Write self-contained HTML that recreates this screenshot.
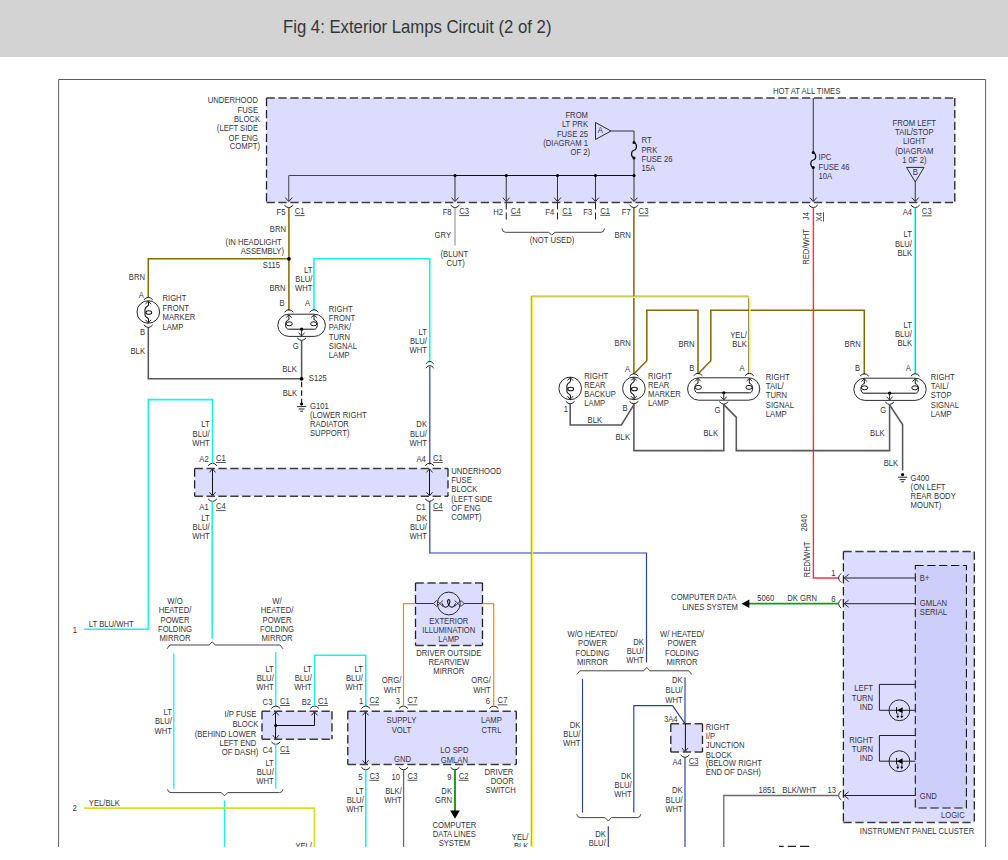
<!DOCTYPE html>
<html lang="en">
<head>
<meta charset="utf-8">
<title>Fig 4: Exterior Lamps Circuit (2 of 2)</title>
<style>
html,body{margin:0;padding:0;background:#fff;}
body{width:1008px;height:860px;position:relative;overflow:hidden;font-family:"Liberation Sans",sans-serif;}
.hdr{position:absolute;left:0;top:0;width:1008px;height:57px;background:#d3d3d3;}
.hdr h1{position:absolute;left:282.6px;top:16.5px;margin:0;font-weight:normal;font-size:17.8px;line-height:20px;color:#363636;white-space:nowrap;letter-spacing:0;transform:scaleX(0.94);transform-origin:0 0;}
svg{position:absolute;left:0;top:0;}
svg text{font-family:"Liberation Sans",sans-serif;font-size:8.3px;fill:#34343c;}
.clip{position:absolute;left:0;top:847px;width:1008px;height:13px;background:#fff;}
</style>
</head>
<body>
<div class="hdr"><h1>Fig 4: Exterior Lamps Circuit (2 of 2)</h1></div>
<svg width="1008" height="860" viewBox="0 0 1008 860">
<path d="M58.6,847 V79.5 H985.6 V847" stroke="#5c5c5c" stroke-width="1" fill="none"/>
<rect x="266.5" y="98" width="688.3" height="104.4" fill="#dcdcff" stroke="none"/>
<path d="M266.5,98 H954.8 M266.5,202.4 H954.8" stroke="#3c3c3c" stroke-width="1.5" stroke-dasharray="8.3 3.6" fill="none"/>
<path d="M266.5,98 V202.4 M954.8,98 V202.4" stroke="#222" stroke-width="1.3" stroke-dasharray="8.3 3.6" fill="none"/>
<text transform="translate(258 103.2) scale(0.924 1)" text-anchor="end">UNDERHOOD</text>
<text transform="translate(258 113) scale(0.924 1)" text-anchor="end">FUSE</text>
<text transform="translate(260 122.2) scale(0.924 1)" text-anchor="end">BLOCK</text>
<text transform="translate(258 131.2) scale(0.924 1)" text-anchor="end">(LEFT SIDE</text>
<text transform="translate(258 140.6) scale(0.924 1)" text-anchor="end">OF ENG</text>
<text transform="translate(260 149.4) scale(0.924 1)" text-anchor="end">COMPT)</text>
<path d="M288.75,201 L288.75,175.5 L455,175.5" stroke="#444" stroke-width="1.0" fill="none" stroke-linejoin="miter"/>
<path d="M455,175.5 L634,175.5" stroke="#111" stroke-width="1.1" fill="none" stroke-linejoin="miter"/>
<path d="M455,175.5 L455,201" stroke="#333" stroke-width="1.0" fill="none" stroke-linejoin="miter"/>
<circle cx="455" cy="175.5" r="1.6" fill="#000"/>
<path d="M506.25,175.5 L506.25,201" stroke="#333" stroke-width="1.0" fill="none" stroke-linejoin="miter"/>
<circle cx="506.25" cy="175.5" r="1.6" fill="#000"/>
<path d="M557.5,175.5 L557.5,201" stroke="#333" stroke-width="1.0" fill="none" stroke-linejoin="miter"/>
<circle cx="557.5" cy="175.5" r="1.6" fill="#000"/>
<path d="M595.5,175.5 L595.5,201" stroke="#333" stroke-width="1.0" fill="none" stroke-linejoin="miter"/>
<circle cx="595.5" cy="175.5" r="1.6" fill="#000"/>
<path d="M634,158 L634,201" stroke="#333" stroke-width="1.0" fill="none" stroke-linejoin="miter"/>
<circle cx="634" cy="175.5" r="1.6" fill="#000"/>
<path d="M285.35,197.6 L288.75,201.6 L292.15,197.6" stroke="#2a2a2a" stroke-width="1" fill="none"/>
<path d="M451.6,197.6 L455,201.6 L458.4,197.6" stroke="#2a2a2a" stroke-width="1" fill="none"/>
<path d="M502.85,197.6 L506.25,201.6 L509.65,197.6" stroke="#2a2a2a" stroke-width="1" fill="none"/>
<path d="M554.1,197.6 L557.5,201.6 L560.9,197.6" stroke="#2a2a2a" stroke-width="1" fill="none"/>
<path d="M592.1,197.6 L595.5,201.6 L598.9,197.6" stroke="#2a2a2a" stroke-width="1" fill="none"/>
<path d="M630.6,197.6 L634,201.6 L637.4,197.6" stroke="#2a2a2a" stroke-width="1" fill="none"/>
<path d="M284.35,205.1 Q288.75,210.1 293.15,205.1" stroke="#111" stroke-width="0.95" fill="none"/>
<path d="M450.6,205.1 Q455,210.1 459.4,205.1" stroke="#111" stroke-width="0.95" fill="none"/>
<path d="M629.6,205.1 Q634,210.1 638.4,205.1" stroke="#111" stroke-width="0.95" fill="none"/>
<path d="M506.25,202.5 V221.5" stroke="#222" stroke-width="1" stroke-dasharray="7 3" fill="none"/>
<path d="M557.5,202.5 V221.5" stroke="#222" stroke-width="1" stroke-dasharray="7 3" fill="none"/>
<path d="M595.5,202.5 V221.5" stroke="#222" stroke-width="1" stroke-dasharray="7 3" fill="none"/>
<path d="M502,228.5 Q502.5,232.3 505.5,232.3 H548.55 L551.75,235 L554.95,232.3 H601.0 Q604.0,232.3 604.5,228.5" stroke="#444" stroke-width="1" fill="none"/>
<text transform="translate(552 243.2) scale(0.924 1)" text-anchor="middle">(NOT USED)</text>
<path d="M595.5,122.5 L611,131 L595.5,139.5 Z" stroke="#2a2a2a" stroke-width="1" fill="none"/>
<text transform="translate(600.2 133.2) scale(0.924 1)" text-anchor="middle">A</text>
<path d="M611,131 L634,131 L634,142.5" stroke="#333" stroke-width="1.0" fill="none" stroke-linejoin="miter"/>
<circle cx="634" cy="142.5" r="1.5" fill="#000"/>
<circle cx="634" cy="158" r="1.5" fill="#000"/>
<path d="M634,142.5 C637.4,144.0 637.2,149.25 634,150.25 C630.8,151.25 630.6,156.5 634,158" stroke="#111" stroke-width="1.25" fill="none"/>
<text transform="translate(588 118.2) scale(0.924 1)" text-anchor="end">FROM</text>
<text transform="translate(588 127.4) scale(0.924 1)" text-anchor="end">LT PRK</text>
<text transform="translate(588 137) scale(0.924 1)" text-anchor="end">FUSE 25</text>
<text transform="translate(588 146) scale(0.924 1)" text-anchor="end">(DIAGRAM 1</text>
<text transform="translate(590 155.2) scale(0.924 1)" text-anchor="end">OF 2)</text>
<text transform="translate(641.5 143.2) scale(0.924 1)" text-anchor="start">RT</text>
<text transform="translate(641.5 152.6) scale(0.924 1)" text-anchor="start">PRK</text>
<text transform="translate(641.5 162) scale(0.924 1)" text-anchor="start">FUSE 26</text>
<text transform="translate(641.5 171.4) scale(0.924 1)" text-anchor="start">15A</text>
<path d="M813.25,98 L813.25,152.5" stroke="#333" stroke-width="1.0" fill="none" stroke-linejoin="miter"/>
<path d="M813.25,167.5 L813.25,201" stroke="#333" stroke-width="1.0" fill="none" stroke-linejoin="miter"/>
<circle cx="813.25" cy="152.5" r="1.5" fill="#000"/>
<circle cx="813.25" cy="167.5" r="1.5" fill="#000"/>
<path d="M813.25,152.5 C816.65,154.0 816.45,159.0 813.25,160.0 C810.05,161.0 809.85,166.0 813.25,167.5" stroke="#111" stroke-width="1.25" fill="none"/>
<path d="M809.85,197.6 L813.25,201.6 L816.65,197.6" stroke="#2a2a2a" stroke-width="1" fill="none"/>
<path d="M808.85,205.1 Q813.25,210.1 817.65,205.1" stroke="#111" stroke-width="0.95" fill="none"/>
<text transform="translate(773 94) scale(0.924 1)" text-anchor="start">HOT AT ALL TIMES</text>
<text transform="translate(818.5 159.8) scale(0.924 1)" text-anchor="start">IPC</text>
<text transform="translate(818.5 169.6) scale(0.924 1)" text-anchor="start">FUSE 46</text>
<text transform="translate(818.5 179) scale(0.924 1)" text-anchor="start">10A</text>
<text transform="translate(914.3 125.6) scale(0.924 1)" text-anchor="middle">FROM LEFT</text>
<text transform="translate(914.3 134.6) scale(0.924 1)" text-anchor="middle">TAIL/STOP</text>
<text transform="translate(914.3 144) scale(0.924 1)" text-anchor="middle">LIGHT</text>
<text transform="translate(914.3 153.8) scale(0.924 1)" text-anchor="middle">(DIAGRAM</text>
<text transform="translate(914.3 162.6) scale(0.924 1)" text-anchor="middle">1 0F 2)</text>
<path d="M906.5,167.4 H924 L915.25,182 Z" stroke="#2a2a2a" stroke-width="1" fill="none"/>
<text transform="translate(915.25 175.4) scale(0.924 1)" text-anchor="middle">B</text>
<path d="M915.25,182 L915.25,201" stroke="#333" stroke-width="1.0" fill="none" stroke-linejoin="miter"/>
<path d="M911.85,197.6 L915.25,201.6 L918.65,197.6" stroke="#2a2a2a" stroke-width="1" fill="none"/>
<path d="M910.85,205.1 Q915.25,210.1 919.65,205.1" stroke="#111" stroke-width="0.95" fill="none"/>
<text transform="translate(285.55 215.0) scale(0.924 1)" text-anchor="end">F5</text>
<text transform="translate(294.75 214.2) scale(0.924 1)" text-anchor="start" text-decoration="underline">C1</text>
<text transform="translate(451.6 215.0) scale(0.924 1)" text-anchor="end">F8</text>
<text transform="translate(459.2 214.2) scale(0.924 1)" text-anchor="start" text-decoration="underline">C3</text>
<text transform="translate(503.05 214.6) scale(0.924 1)" text-anchor="end">H2</text>
<text transform="translate(510.85 213.8) scale(0.924 1)" text-anchor="start" text-decoration="underline">C4</text>
<text transform="translate(554.3 214.6) scale(0.924 1)" text-anchor="end">F4</text>
<text transform="translate(562.3 213.8) scale(0.924 1)" text-anchor="start" text-decoration="underline">C1</text>
<text transform="translate(592.3 214.6) scale(0.924 1)" text-anchor="end">F3</text>
<text transform="translate(600.3 213.8) scale(0.924 1)" text-anchor="start" text-decoration="underline">C1</text>
<text transform="translate(630.8 215.2) scale(0.924 1)" text-anchor="end">F7</text>
<text transform="translate(638.6 214.4) scale(0.924 1)" text-anchor="start" text-decoration="underline">C3</text>
<text transform="translate(912.05 215.2) scale(0.924 1)" text-anchor="end">A4</text>
<text transform="translate(921.85 214.4) scale(0.924 1)" text-anchor="start" text-decoration="underline">C3</text>
<text transform="translate(809.4 220.2) rotate(-90) scale(0.924 1)" text-anchor="start">J4</text>
<text transform="translate(822.0 221.5) rotate(-90) scale(0.924 1)" text-anchor="start" text-decoration="underline">X4</text>
<text transform="translate(809.2 264.8) rotate(-90) scale(0.924 1)" text-anchor="start">RED/WHT</text>
<path d="M288.9,207.4 L288.9,310.4" stroke="#886a06" stroke-width="1.55" fill="none" stroke-linejoin="miter"/>
<path d="M288.9,258.8 L148.3,258.8 L148.3,297.2" stroke="#886a06" stroke-width="1.55" fill="none" stroke-linejoin="miter"/>
<circle cx="288.9" cy="258.8" r="1.9" fill="#000"/>
<text transform="translate(286 231.8) scale(0.924 1)" text-anchor="end">BRN</text>
<text transform="translate(281.8 245) scale(0.924 1)" text-anchor="end">(IN HEADLIGHT</text>
<text transform="translate(284 254) scale(0.924 1)" text-anchor="end">ASSEMBLY)</text>
<text transform="translate(280 268.2) scale(0.924 1)" text-anchor="end">S115</text>
<text transform="translate(145 279.6) scale(0.924 1)" text-anchor="end">BRN</text>
<circle cx="148.3" cy="312" r="11.3" fill="none" stroke="#2a2a2a" stroke-width="1"/>
<path d="M148.3,301.2 L148.60000000000002,304.2 C148.70000000000002,306.8 145.0,306.2 145.0,309.4 L145.0,314.8 C145.0,317.8 148.70000000000002,317.2 148.60000000000002,319.8 L148.3,322.8" stroke="#111" stroke-width="1.1" fill="none"/>
<ellipse cx="148.8" cy="312.5" rx="2.9" ry="1.75" fill="none" stroke="#111" stroke-width="1.05"/>
<path d="M145.5,304.2 L148.3,301 L151.10000000000002,304.2" stroke="#2a2a2a" stroke-width="1" fill="none"/>
<path d="M145.5,319.8 L148.3,323 L151.10000000000002,319.8" stroke="#2a2a2a" stroke-width="1" fill="none"/>
<path d="M143.9,299.8 Q148.3,294.8 152.70000000000002,299.8" stroke="#111" stroke-width="0.95" fill="none"/>
<path d="M143.9,324.9 Q148.3,329.9 152.70000000000002,324.9" stroke="#111" stroke-width="0.95" fill="none"/>
<text transform="translate(141.2 297.6) scale(0.924 1)" text-anchor="middle">A</text>
<text transform="translate(142.6 335.2) scale(0.924 1)" text-anchor="middle">B</text>
<text transform="translate(162.5 301.2) scale(0.924 1)" text-anchor="start">RIGHT</text>
<text transform="translate(162.5 310.8) scale(0.924 1)" text-anchor="start">FRONT</text>
<text transform="translate(162.5 320.2) scale(0.924 1)" text-anchor="start">MARKER</text>
<text transform="translate(162.5 329.6) scale(0.924 1)" text-anchor="start">LAMP</text>
<text transform="translate(145 353.8) scale(0.924 1)" text-anchor="end">BLK</text>
<path d="M148.3,327.2 L148.3,378.8 L301.6,378.8" stroke="#585858" stroke-width="1.55" fill="none" stroke-linejoin="miter"/>
<path d="M314,310.4 L314,258.8 L429.8,258.8 L429.8,361.6" stroke="#14f4ec" stroke-width="1.55" fill="none" stroke-linejoin="miter"/>
<text transform="translate(312.4 272.6) scale(0.924 1)" text-anchor="end">LT</text>
<text transform="translate(312.4 282) scale(0.924 1)" text-anchor="end">BLU/</text>
<text transform="translate(312.4 291.2) scale(0.924 1)" text-anchor="end">WHT</text>
<text transform="translate(285.6 291.2) scale(0.924 1)" text-anchor="end">BRN</text>
<text transform="translate(282 306) scale(0.924 1)" text-anchor="middle">B</text>
<text transform="translate(307.6 306) scale(0.924 1)" text-anchor="middle">A</text>
<rect x="277.8" y="314.2" width="47.599999999999966" height="22.19999999999999" rx="11.099999999999994" ry="11.099999999999994" fill="none" stroke="#2a2a2a" stroke-width="1"/>
<path d="M288.9,314.7 V319.7 C284.4,320.2 284.7,329.2 288.4,329.2 H314.5 C318.2,329.2 318.5,320.2 314,319.7 V314.7" stroke="#111" stroke-width="1" fill="none"/>
<ellipse cx="289.2" cy="323.8" rx="3.1" ry="2.0" fill="none" stroke="#111" stroke-width="1"/>
<ellipse cx="313.7" cy="323.8" rx="3.1" ry="2.0" fill="none" stroke="#111" stroke-width="1"/>
<path d="M286.09999999999997,317.7 L288.9,314.7 L291.7,317.7" stroke="#2a2a2a" stroke-width="1" fill="none"/>
<path d="M311.2,317.7 L314,314.7 L316.8,317.7" stroke="#2a2a2a" stroke-width="1" fill="none"/>
<circle cx="301.6" cy="329.2" r="1.6" fill="#000"/>
<path d="M301.6,329.2 L301.6,335.9" stroke="#2a2a2a" stroke-width="1.0" fill="none" stroke-linejoin="miter"/>
<path d="M298.6,332.7 L301.6,336.09999999999997 L304.6,332.7" stroke="#2a2a2a" stroke-width="1" fill="none"/>
<path d="M284.5,312.2 Q288.9,307.2 293.29999999999995,312.2" stroke="#111" stroke-width="0.95" fill="none"/>
<path d="M309.6,312.2 Q314,307.2 318.4,312.2" stroke="#111" stroke-width="0.95" fill="none"/>
<path d="M297.20000000000005,337.9 Q301.6,342.9 306.0,337.9" stroke="#111" stroke-width="0.95" fill="none"/>
<text transform="translate(298.8 349) scale(0.924 1)" text-anchor="end">G</text>
<text transform="translate(328.8 311.8) scale(0.924 1)" text-anchor="start">RIGHT</text>
<text transform="translate(328.8 320.8) scale(0.924 1)" text-anchor="start">FRONT</text>
<text transform="translate(328.8 330) scale(0.924 1)" text-anchor="start">PARK/</text>
<text transform="translate(328.8 339.6) scale(0.924 1)" text-anchor="start">TURN</text>
<text transform="translate(328.8 348.8) scale(0.924 1)" text-anchor="start">SIGNAL</text>
<text transform="translate(328.8 357.8) scale(0.924 1)" text-anchor="start">LAMP</text>
<path d="M301.6,340 L301.6,378.8" stroke="#585858" stroke-width="1.55" fill="none" stroke-linejoin="miter"/>
<circle cx="301.6" cy="378.8" r="1.9" fill="#000"/>
<path d="M301.6,378.8 V403" stroke="#222" stroke-width="1.2" stroke-dasharray="5.5 3" stroke-dashoffset="-3" fill="none"/>
<circle cx="301.6" cy="404" r="1.6" fill="#000"/>
<path d="M297.0,406.6 H306.20000000000005 M298.6,409 H304.6 M300.20000000000005,411.2 H303.0" stroke="#2a2a2a" stroke-width="1" fill="none"/>
<text transform="translate(296.8 372) scale(0.924 1)" text-anchor="end">BLK</text>
<text transform="translate(297.2 396) scale(0.924 1)" text-anchor="end">BLK</text>
<text transform="translate(308.8 381.4) scale(0.924 1)" text-anchor="start">S125</text>
<text transform="translate(310 408.8) scale(0.924 1)" text-anchor="start">G101</text>
<text transform="translate(310 417.8) scale(0.924 1)" text-anchor="start">(LOWER RIGHT</text>
<text transform="translate(310 427.2) scale(0.924 1)" text-anchor="start">RADIATOR</text>
<text transform="translate(310 436) scale(0.924 1)" text-anchor="start">SUPPORT)</text>
<path d="M455,207.4 L455,245.4" stroke="#a8a8a8" stroke-width="1.4" fill="none" stroke-linejoin="miter"/>
<text transform="translate(451 237.6) scale(0.924 1)" text-anchor="end">GRY</text>
<text transform="translate(454.4 257.2) scale(0.924 1)" text-anchor="middle">(BLUNT</text>
<text transform="translate(455.6 266) scale(0.924 1)" text-anchor="middle">CUT)</text>
<path d="M425.8,363.9 Q429.8,358.9 433.8,363.9" stroke="#111" stroke-width="0.95" fill="none"/>
<path d="M425.8,368.1 Q429.8,363.1 433.8,368.1" stroke="#111" stroke-width="0.95" fill="none"/>
<path d="M429.8,366.4 L429.8,464.4" stroke="#2640a0" stroke-width="1.2" fill="none" stroke-linejoin="miter"/>
<text transform="translate(427 334.6) scale(0.924 1)" text-anchor="end">LT</text>
<text transform="translate(427 343.8) scale(0.924 1)" text-anchor="end">BLU/</text>
<text transform="translate(427 353.2) scale(0.924 1)" text-anchor="end">WHT</text>
<text transform="translate(427 427.2) scale(0.924 1)" text-anchor="end">DK</text>
<text transform="translate(427 436.8) scale(0.924 1)" text-anchor="end">BLU/</text>
<text transform="translate(427 445.8) scale(0.924 1)" text-anchor="end">WHT</text>
<rect x="194.6" y="468.4" width="253.4" height="27.80000000000001" fill="#dcdcff" stroke="none"/>
<path d="M194.6,468.4 H448 M194.6,496.2 H448" stroke="#3c3c3c" stroke-width="1.5" stroke-dasharray="8.3 3.6" fill="none"/>
<path d="M194.6,468.4 V496.2 M448,468.4 V496.2" stroke="#222" stroke-width="1.3" stroke-dasharray="8.3 3.6" fill="none"/>
<path d="M212.5,469 L212.5,495.6" stroke="#111" stroke-width="1.0" fill="none" stroke-linejoin="miter"/>
<path d="M209.5,472.40000000000003 L212.5,468.8 L215.5,472.40000000000003" stroke="#2a2a2a" stroke-width="1" fill="none"/>
<path d="M209.5,492.2 L212.5,495.8 L215.5,492.2" stroke="#2a2a2a" stroke-width="1" fill="none"/>
<path d="M208.1,465.7 Q212.5,460.7 216.9,465.7" stroke="#111" stroke-width="0.95" fill="none"/>
<path d="M208.1,498.9 Q212.5,503.9 216.9,498.9" stroke="#111" stroke-width="0.95" fill="none"/>
<path d="M429.5,469 L429.5,495.6" stroke="#111" stroke-width="1.0" fill="none" stroke-linejoin="miter"/>
<path d="M426.5,472.40000000000003 L429.5,468.8 L432.5,472.40000000000003" stroke="#2a2a2a" stroke-width="1" fill="none"/>
<path d="M426.5,492.2 L429.5,495.8 L432.5,492.2" stroke="#2a2a2a" stroke-width="1" fill="none"/>
<path d="M425.1,465.7 Q429.5,460.7 433.9,465.7" stroke="#111" stroke-width="0.95" fill="none"/>
<path d="M425.1,498.9 Q429.5,503.9 433.9,498.9" stroke="#111" stroke-width="0.95" fill="none"/>
<path d="M212.5,463.6 L212.5,399.6 L148.3,399.6 L148.3,629.3 L84.2,629.3" stroke="#14f4ec" stroke-width="1.55" fill="none" stroke-linejoin="miter"/>
<path d="M212.2,501 L212.2,638.8" stroke="#14f4ec" stroke-width="1.55" fill="none" stroke-linejoin="miter"/>
<text transform="translate(209.6 427.2) scale(0.924 1)" text-anchor="end">LT</text>
<text transform="translate(209.6 436.8) scale(0.924 1)" text-anchor="end">BLU/</text>
<text transform="translate(209.6 445.8) scale(0.924 1)" text-anchor="end">WHT</text>
<text transform="translate(208.7 461.8) scale(0.924 1)" text-anchor="end">A2</text>
<text transform="translate(215.9 461.0) scale(0.924 1)" text-anchor="start" text-decoration="underline">C1</text>
<text transform="translate(208.7 510.0) scale(0.924 1)" text-anchor="end">A1</text>
<text transform="translate(215.9 509.2) scale(0.924 1)" text-anchor="start" text-decoration="underline">C4</text>
<text transform="translate(209.6 520.6) scale(0.924 1)" text-anchor="end">LT</text>
<text transform="translate(209.6 529.6) scale(0.924 1)" text-anchor="end">BLU/</text>
<text transform="translate(209.6 539.4) scale(0.924 1)" text-anchor="end">WHT</text>
<text transform="translate(425.8 461.8) scale(0.924 1)" text-anchor="end">A4</text>
<text transform="translate(433.0 461.0) scale(0.924 1)" text-anchor="start" text-decoration="underline">C1</text>
<text transform="translate(425.8 510.0) scale(0.924 1)" text-anchor="end">C1</text>
<text transform="translate(433.0 509.2) scale(0.924 1)" text-anchor="start" text-decoration="underline">C4</text>
<text transform="translate(427 520.6) scale(0.924 1)" text-anchor="end">DK</text>
<text transform="translate(427 529.6) scale(0.924 1)" text-anchor="end">BLU/</text>
<text transform="translate(427 539.4) scale(0.924 1)" text-anchor="end">WHT</text>
<text transform="translate(451.3 473.8) scale(0.924 1)" text-anchor="start">UNDERHOOD</text>
<text transform="translate(451.3 482.6) scale(0.924 1)" text-anchor="start">FUSE</text>
<text transform="translate(451.3 492) scale(0.924 1)" text-anchor="start">BLOCK</text>
<text transform="translate(451.3 501.8) scale(0.924 1)" text-anchor="start">(LEFT SIDE</text>
<text transform="translate(451.3 510.6) scale(0.924 1)" text-anchor="start">OF ENG</text>
<text transform="translate(451.3 520) scale(0.924 1)" text-anchor="start">COMPT)</text>
<path d="M429.8,501 L429.8,553 L646.5,553 L646.5,662.6" stroke="#2640a0" stroke-width="1.2" fill="none" stroke-linejoin="miter"/>
<text transform="translate(75 632.6) scale(0.924 1)" text-anchor="middle">1</text>
<text transform="translate(88.8 627) scale(0.924 1)" text-anchor="start">LT BLU/WHT</text>
<path d="M633.9,207.4 L633.9,374" stroke="#886a06" stroke-width="1.55" fill="none" stroke-linejoin="miter"/>
<text transform="translate(630.8 238) scale(0.924 1)" text-anchor="end">BRN</text>
<path d="M633.9,374 L646.8,360.8 L646.8,310.2 L698,310.2 L698,374" stroke="#886a06" stroke-width="1.55" fill="none" stroke-linejoin="miter"/>
<path d="M698,374 L710.8,360.8 L710.8,310.2 L864.3,310.2 L864.3,374.4" stroke="#886a06" stroke-width="1.55" fill="none" stroke-linejoin="miter"/>
<path d="M813.4,207.6 L813.4,578 L838.6,578" stroke="#ff3038" stroke-width="1.4" fill="none" stroke-linejoin="miter"/>
<path d="M531.3,846.4 L531.3,296.2 L748.6999999999999,296.2 L748.6999999999999,373.4" stroke="#66665c" stroke-width="0.9" fill="none" stroke-linejoin="miter"/>
<path d="M532.4,847.5 L532.4,297.3 L749.8,297.3 L749.8,374.5" stroke="#fbfb2a" stroke-width="1.4" fill="none" stroke-linejoin="miter"/>
<text transform="translate(630.8 346.4) scale(0.924 1)" text-anchor="end">BRN</text>
<text transform="translate(694.6 346.8) scale(0.924 1)" text-anchor="end">BRN</text>
<text transform="translate(746.8 338) scale(0.924 1)" text-anchor="end">YEL/</text>
<text transform="translate(746.8 347.2) scale(0.924 1)" text-anchor="end">BLK</text>
<circle cx="570.2" cy="388.4" r="11.3" fill="none" stroke="#2a2a2a" stroke-width="1"/>
<path d="M570.2,377.59999999999997 L570.5,380.59999999999997 C570.6,383.2 566.9000000000001,382.59999999999997 566.9000000000001,385.79999999999995 L566.9000000000001,391.2 C566.9000000000001,394.2 570.6,393.59999999999997 570.5,396.2 L570.2,399.2" stroke="#111" stroke-width="1.1" fill="none"/>
<ellipse cx="570.7" cy="388.9" rx="2.9" ry="1.75" fill="none" stroke="#111" stroke-width="1.05"/>
<path d="M567.4000000000001,380.59999999999997 L570.2,377.4 L573.0,380.59999999999997" stroke="#2a2a2a" stroke-width="1" fill="none"/>
<path d="M567.4000000000001,396.2 L570.2,399.4 L573.0,396.2" stroke="#2a2a2a" stroke-width="1" fill="none"/>
<path d="M565.8000000000001,401.29999999999995 Q570.2,406.29999999999995 574.6,401.29999999999995" stroke="#111" stroke-width="0.95" fill="none"/>
<circle cx="633.9" cy="388.4" r="11.3" fill="none" stroke="#2a2a2a" stroke-width="1"/>
<path d="M633.9,377.59999999999997 L634.1999999999999,380.59999999999997 C634.3,383.2 630.6,382.59999999999997 630.6,385.79999999999995 L630.6,391.2 C630.6,394.2 634.3,393.59999999999997 634.1999999999999,396.2 L633.9,399.2" stroke="#111" stroke-width="1.1" fill="none"/>
<ellipse cx="634.4" cy="388.9" rx="2.9" ry="1.75" fill="none" stroke="#111" stroke-width="1.05"/>
<path d="M631.1,380.59999999999997 L633.9,377.4 L636.6999999999999,380.59999999999997" stroke="#2a2a2a" stroke-width="1" fill="none"/>
<path d="M631.1,396.2 L633.9,399.4 L636.6999999999999,396.2" stroke="#2a2a2a" stroke-width="1" fill="none"/>
<path d="M629.5,376.2 Q633.9,371.2 638.3,376.2" stroke="#111" stroke-width="0.95" fill="none"/>
<path d="M629.5,401.29999999999995 Q633.9,406.29999999999995 638.3,401.29999999999995" stroke="#111" stroke-width="0.95" fill="none"/>
<text transform="translate(584.3 378.8) scale(0.924 1)" text-anchor="start">RIGHT</text>
<text transform="translate(584.3 388) scale(0.924 1)" text-anchor="start">REAR</text>
<text transform="translate(584.3 397.2) scale(0.924 1)" text-anchor="start">BACKUP</text>
<text transform="translate(584.3 406) scale(0.924 1)" text-anchor="start">LAMP</text>
<text transform="translate(648 378.8) scale(0.924 1)" text-anchor="start">RIGHT</text>
<text transform="translate(648 388) scale(0.924 1)" text-anchor="start">REAR</text>
<text transform="translate(648 397.2) scale(0.924 1)" text-anchor="start">MARKER</text>
<text transform="translate(648 406) scale(0.924 1)" text-anchor="start">LAMP</text>
<text transform="translate(627.6 372) scale(0.924 1)" text-anchor="middle">A</text>
<text transform="translate(625 411) scale(0.924 1)" text-anchor="middle">B</text>
<text transform="translate(566 411.8) scale(0.924 1)" text-anchor="middle">1</text>
<path d="M570.2,403.6 L570.2,424.9 L621.4,424.9 L633.9,404.6" stroke="#585858" stroke-width="1.55" fill="none" stroke-linejoin="miter"/>
<path d="M633.9,404 L633.9,450.6 L723.8,450.6 L723.8,404.6" stroke="#585858" stroke-width="1.55" fill="none" stroke-linejoin="miter"/>
<path d="M723.8,404.6 L736.3,417.4 L736.3,450.6 L889.6,450.6 L889.6,405" stroke="#585858" stroke-width="1.55" fill="none" stroke-linejoin="miter"/>
<path d="M889.6,405 L902.6,424.6 L902.6,470.5" stroke="#585858" stroke-width="1.55" fill="none" stroke-linejoin="miter"/>
<text transform="translate(587.6 423) scale(0.924 1)" text-anchor="start">BLK</text>
<text transform="translate(630 440) scale(0.924 1)" text-anchor="end">BLK</text>
<text transform="translate(718 435.6) scale(0.924 1)" text-anchor="end">BLK</text>
<rect x="687.6" y="377.8" width="72.19999999999993" height="22.399999999999977" rx="11.199999999999989" ry="11.199999999999989" fill="none" stroke="#2a2a2a" stroke-width="1"/>
<path d="M698,378.3 V383.3 C693.5,383.8 693.8,392.8 697.5,392.8 H749.8 C753.5,392.8 753.8,383.8 749.3,383.3 V378.3" stroke="#111" stroke-width="1" fill="none"/>
<ellipse cx="698.3" cy="387.40000000000003" rx="3.1" ry="2.0" fill="none" stroke="#111" stroke-width="1"/>
<ellipse cx="749.0" cy="387.40000000000003" rx="3.1" ry="2.0" fill="none" stroke="#111" stroke-width="1"/>
<path d="M695.2,381.3 L698,378.3 L700.8,381.3" stroke="#2a2a2a" stroke-width="1" fill="none"/>
<path d="M746.5,381.3 L749.3,378.3 L752.0999999999999,381.3" stroke="#2a2a2a" stroke-width="1" fill="none"/>
<circle cx="723.8" cy="392.8" r="1.6" fill="#000"/>
<path d="M723.8,392.8 L723.8,399.7" stroke="#2a2a2a" stroke-width="1.0" fill="none" stroke-linejoin="miter"/>
<path d="M720.8,396.5 L723.8,399.9 L726.8,396.5" stroke="#2a2a2a" stroke-width="1" fill="none"/>
<path d="M693.6,375.8 Q698,370.8 702.4,375.8" stroke="#111" stroke-width="0.95" fill="none"/>
<path d="M744.9,375.8 Q749.3,370.8 753.6999999999999,375.8" stroke="#111" stroke-width="0.95" fill="none"/>
<path d="M719.4,401.7 Q723.8,406.7 728.1999999999999,401.7" stroke="#111" stroke-width="0.95" fill="none"/>
<text transform="translate(691.8 370.6) scale(0.924 1)" text-anchor="middle">B</text>
<text transform="translate(742 370.6) scale(0.924 1)" text-anchor="middle">A</text>
<text transform="translate(717.6 412.6) scale(0.924 1)" text-anchor="middle">G</text>
<text transform="translate(765.8 379.6) scale(0.924 1)" text-anchor="start">RIGHT</text>
<text transform="translate(765.8 388.8) scale(0.924 1)" text-anchor="start">TAIL/</text>
<text transform="translate(765.8 398) scale(0.924 1)" text-anchor="start">TURN</text>
<text transform="translate(765.8 407.6) scale(0.924 1)" text-anchor="start">SIGNAL</text>
<text transform="translate(765.8 416.8) scale(0.924 1)" text-anchor="start">LAMP</text>
<path d="M914.55,207.6 L914.55,374.2" stroke="#6cfafa" stroke-width="1.15" fill="none" stroke-linejoin="miter"/>
<path d="M915.6,207.6 L915.6,374.2" stroke="#5c98a8" stroke-width="1.0" fill="none" stroke-linejoin="miter"/>
<text transform="translate(912 237) scale(0.924 1)" text-anchor="end">LT</text>
<text transform="translate(912 246.6) scale(0.924 1)" text-anchor="end">BLU/</text>
<text transform="translate(912 256) scale(0.924 1)" text-anchor="end">BLK</text>
<text transform="translate(912 328) scale(0.924 1)" text-anchor="end">LT</text>
<text transform="translate(912 337.2) scale(0.924 1)" text-anchor="end">BLU/</text>
<text transform="translate(912 346.4) scale(0.924 1)" text-anchor="end">BLK</text>
<text transform="translate(860.8 347) scale(0.924 1)" text-anchor="end">BRN</text>
<rect x="853.8" y="378.2" width="72.40000000000009" height="22.19999999999999" rx="11.099999999999994" ry="11.099999999999994" fill="none" stroke="#2a2a2a" stroke-width="1"/>
<path d="M864.3,378.7 V383.7 C859.8,384.2 860.0999999999999,393.2 863.8,393.2 H915.7 C919.4000000000001,393.2 919.7,384.2 915.2,383.7 V378.7" stroke="#111" stroke-width="1" fill="none"/>
<ellipse cx="864.5999999999999" cy="387.8" rx="3.1" ry="2.0" fill="none" stroke="#111" stroke-width="1"/>
<ellipse cx="914.9000000000001" cy="387.8" rx="3.1" ry="2.0" fill="none" stroke="#111" stroke-width="1"/>
<path d="M861.5,381.7 L864.3,378.7 L867.0999999999999,381.7" stroke="#2a2a2a" stroke-width="1" fill="none"/>
<path d="M912.4000000000001,381.7 L915.2,378.7 L918.0,381.7" stroke="#2a2a2a" stroke-width="1" fill="none"/>
<circle cx="889.6" cy="393.2" r="1.6" fill="#000"/>
<path d="M889.6,393.2 L889.6,399.9" stroke="#2a2a2a" stroke-width="1.0" fill="none" stroke-linejoin="miter"/>
<path d="M886.6,396.7 L889.6,400.09999999999997 L892.6,396.7" stroke="#2a2a2a" stroke-width="1" fill="none"/>
<path d="M859.9,376.2 Q864.3,371.2 868.6999999999999,376.2" stroke="#111" stroke-width="0.95" fill="none"/>
<path d="M910.8000000000001,376.2 Q915.2,371.2 919.6,376.2" stroke="#111" stroke-width="0.95" fill="none"/>
<path d="M885.2,401.9 Q889.6,406.9 894.0,401.9" stroke="#111" stroke-width="0.95" fill="none"/>
<text transform="translate(857.6 370.6) scale(0.924 1)" text-anchor="middle">B</text>
<text transform="translate(908.2 370.6) scale(0.924 1)" text-anchor="middle">A</text>
<text transform="translate(883.2 412.6) scale(0.924 1)" text-anchor="middle">G</text>
<text transform="translate(930.8 379.6) scale(0.924 1)" text-anchor="start">RIGHT</text>
<text transform="translate(930.8 388.8) scale(0.924 1)" text-anchor="start">TAIL/</text>
<text transform="translate(930.8 398) scale(0.924 1)" text-anchor="start">STOP</text>
<text transform="translate(930.8 407.6) scale(0.924 1)" text-anchor="start">SIGNAL</text>
<text transform="translate(930.8 416.8) scale(0.924 1)" text-anchor="start">LAMP</text>
<text transform="translate(884.6 435.6) scale(0.924 1)" text-anchor="end">BLK</text>
<text transform="translate(898.2 465.8) scale(0.924 1)" text-anchor="end">BLK</text>
<circle cx="902.6" cy="474.6" r="1.6" fill="#000"/>
<path d="M898.0,477.20000000000005 H907.2 M899.6,479.6 H905.6 M901.2,481.8 H904.0" stroke="#2a2a2a" stroke-width="1" fill="none"/>
<text transform="translate(910.6 480.8) scale(0.924 1)" text-anchor="start">G400</text>
<text transform="translate(910.6 489.6) scale(0.924 1)" text-anchor="start">(ON LEFT</text>
<text transform="translate(910.6 498.8) scale(0.924 1)" text-anchor="start">REAR BODY</text>
<text transform="translate(910.6 508) scale(0.924 1)" text-anchor="start">MOUNT)</text>
<rect x="843.4" y="551.4" width="130.89999999999998" height="271.0" fill="#dcdcff" stroke="none"/>
<path d="M843.4,551.4 H974.3 M843.4,822.4 H974.3" stroke="#3c3c3c" stroke-width="1.5" stroke-dasharray="8.3 3.6" fill="none"/>
<path d="M843.4,551.4 V822.4 M974.3,551.4 V822.4" stroke="#222" stroke-width="1.3" stroke-dasharray="8.3 3.6" fill="none"/>
<rect x="915.3" y="565.5" width="51.10000000000002" height="242.5" fill="#cecefa" stroke="none"/>
<path d="M915.3,565.5 H966.4 V808 H915.3 Z" stroke="#111" stroke-width="1.05" stroke-dasharray="8.3 3.6" fill="none"/>
<path d="M844.6,578 L915.3,578" stroke="#222" stroke-width="1.0" fill="none" stroke-linejoin="miter"/>
<path d="M848.6,574.4 L844.2,578 L848.6,581.6" stroke="#2a2a2a" stroke-width="1" fill="none"/>
<path d="M841.1999999999999,573.4 Q836.0,578 841.1999999999999,582.6" stroke="#2a2a2a" stroke-width="1" fill="none"/>
<path d="M844.6,603.7 L915.3,603.7" stroke="#222" stroke-width="1.0" fill="none" stroke-linejoin="miter"/>
<path d="M848.6,600.1 L844.2,603.7 L848.6,607.3000000000001" stroke="#2a2a2a" stroke-width="1" fill="none"/>
<path d="M841.1999999999999,599.1 Q836.0,603.7 841.1999999999999,608.3000000000001" stroke="#2a2a2a" stroke-width="1" fill="none"/>
<path d="M844.6,795.5 L915.3,795.5" stroke="#222" stroke-width="1.0" fill="none" stroke-linejoin="miter"/>
<path d="M848.6,791.9 L844.2,795.5 L848.6,799.1" stroke="#2a2a2a" stroke-width="1" fill="none"/>
<path d="M841.1999999999999,790.9 Q836.0,795.5 841.1999999999999,800.1" stroke="#2a2a2a" stroke-width="1" fill="none"/>
<text transform="translate(835.6 576) scale(0.924 1)" text-anchor="end">1</text>
<text transform="translate(835.6 602.4) scale(0.924 1)" text-anchor="end">6</text>
<text transform="translate(836 792.6) scale(0.924 1)" text-anchor="end">13</text>
<text transform="translate(919.8 581.2) scale(0.924 1)" text-anchor="start">B+</text>
<text transform="translate(919.8 606.4) scale(0.924 1)" text-anchor="start">GMLAN</text>
<text transform="translate(919.8 615.2) scale(0.924 1)" text-anchor="start">SERIAL</text>
<text transform="translate(919.8 798.8) scale(0.924 1)" text-anchor="start">GND</text>
<text transform="translate(964.8 818) scale(0.924 1)" text-anchor="end">LOGIC</text>
<text transform="translate(859.8 833.8) scale(0.924 1)" text-anchor="start">INSTRUMENT PANEL CLUSTER</text>
<text transform="translate(807.4 531.4) rotate(-90) scale(0.924 1)" text-anchor="start">2840</text>
<text transform="translate(809.6 577.4) rotate(-90) scale(0.924 1)" text-anchor="start">RED/WHT</text>
<path d="M749,603.7 L838.6,603.7" stroke="#189818" stroke-width="1.8" fill="none" stroke-linejoin="miter"/>
<path d="M741.6,603.7 L749.4,599.4 V608 Z" fill="#000"/>
<text transform="translate(736.4 599.6) scale(0.924 1)" text-anchor="end">COMPUTER DATA</text>
<text transform="translate(738 609.6) scale(0.924 1)" text-anchor="end">LINES SYSTEM</text>
<text transform="translate(757.2 600.6) scale(0.924 1)" text-anchor="start">5060</text>
<text transform="translate(787.2 600.6) scale(0.924 1)" text-anchor="start">DK GRN</text>
<path d="M838.6,795.5 L723.8,795.5 L723.8,847" stroke="#6a6a6a" stroke-width="1.3" fill="none" stroke-linejoin="miter"/>
<text transform="translate(758.5 792.6) scale(0.924 1)" text-anchor="start">1851</text>
<text transform="translate(782.3 792.6) scale(0.924 1)" text-anchor="start">BLK/WHT</text>
<path d="M915.3,684.4 L879.4,684.4 L879.4,710.3 L915.3,710.3" stroke="#222" stroke-width="1.0" fill="none" stroke-linejoin="miter"/>
<circle cx="899.4" cy="710.3" r="10.4" fill="none" stroke="#2a2a2a" stroke-width="1"/>
<path d="M897.0,710.3 L902.6,707.3 V713.3 Z" fill="#000"/>
<path d="M896.6,707.0999999999999 V713.5" stroke="#000" stroke-width="1"/>
<path d="M897.8,713.3 V716.6999999999999" stroke="#000" stroke-width="0.8"/>
<path d="M896.3,715.9 H899.3 L897.8,718.3 Z" fill="#000"/>
<path d="M901.8,713.3 V716.6999999999999" stroke="#000" stroke-width="0.8"/>
<path d="M900.3,715.9 H903.3 L901.8,718.3 Z" fill="#000"/>
<path d="M915.3,735.5 L879.4,735.5 L879.4,761.2 L915.3,761.2" stroke="#222" stroke-width="1.0" fill="none" stroke-linejoin="miter"/>
<circle cx="899.4" cy="761.2" r="10.4" fill="none" stroke="#2a2a2a" stroke-width="1"/>
<path d="M897.0,761.2 L902.6,758.2 V764.2 Z" fill="#000"/>
<path d="M896.6,758.0 V764.4000000000001" stroke="#000" stroke-width="1"/>
<path d="M897.8,764.2 V767.6" stroke="#000" stroke-width="0.8"/>
<path d="M896.3,766.8000000000001 H899.3 L897.8,769.2 Z" fill="#000"/>
<path d="M901.8,764.2 V767.6" stroke="#000" stroke-width="0.8"/>
<path d="M900.3,766.8000000000001 H903.3 L901.8,769.2 Z" fill="#000"/>
<text transform="translate(873 691.4) scale(0.924 1)" text-anchor="end">LEFT</text>
<text transform="translate(873 700.6) scale(0.924 1)" text-anchor="end">TURN</text>
<text transform="translate(873 709.8) scale(0.924 1)" text-anchor="end">IND</text>
<text transform="translate(873 742.6) scale(0.924 1)" text-anchor="end">RIGHT</text>
<text transform="translate(873 751.8) scale(0.924 1)" text-anchor="end">TURN</text>
<text transform="translate(873 760.8) scale(0.924 1)" text-anchor="end">IND</text>
<path d="M779,846.3 H783.7 M787.8,846.3 H796 M800,846.3 H809.2" stroke="#222" stroke-width="1.2"/>
<text transform="translate(175 603.8) scale(0.924 1)" text-anchor="middle">W/O</text>
<text transform="translate(175 613) scale(0.924 1)" text-anchor="middle">HEATED/</text>
<text transform="translate(175 622.6) scale(0.924 1)" text-anchor="middle">POWER</text>
<text transform="translate(175 631.8) scale(0.924 1)" text-anchor="middle">FOLDING</text>
<text transform="translate(175 640.8) scale(0.924 1)" text-anchor="middle">MIRROR</text>
<text transform="translate(277 603.8) scale(0.924 1)" text-anchor="middle">W/</text>
<text transform="translate(277 613) scale(0.924 1)" text-anchor="middle">HEATED/</text>
<text transform="translate(277 622.6) scale(0.924 1)" text-anchor="middle">POWER</text>
<text transform="translate(277 631.8) scale(0.924 1)" text-anchor="middle">FOLDING</text>
<text transform="translate(277 640.8) scale(0.924 1)" text-anchor="middle">MIRROR</text>
<path d="M167,648.8 L170,645 H209.2 L212.2,641.8 L215.2,645 H280 L283,648.8" stroke="#444" stroke-width="1" fill="none"/>
<path d="M173.8,653.6 L173.8,788.8" stroke="#14f4ec" stroke-width="1.3" fill="none" stroke-linejoin="miter"/>
<path d="M275.8,652 L275.8,706.4" stroke="#14f4ec" stroke-width="1.3" fill="none" stroke-linejoin="miter"/>
<text transform="translate(172 715) scale(0.924 1)" text-anchor="end">LT</text>
<text transform="translate(172 724.4) scale(0.924 1)" text-anchor="end">BLU/</text>
<text transform="translate(172 733.8) scale(0.924 1)" text-anchor="end">WHT</text>
<text transform="translate(273.8 672) scale(0.924 1)" text-anchor="end">LT</text>
<text transform="translate(273.8 681.4) scale(0.924 1)" text-anchor="end">BLU/</text>
<text transform="translate(273.8 690.2) scale(0.924 1)" text-anchor="end">WHT</text>
<text transform="translate(311.8 672) scale(0.924 1)" text-anchor="end">LT</text>
<text transform="translate(311.8 681.4) scale(0.924 1)" text-anchor="end">BLU/</text>
<text transform="translate(311.8 690.2) scale(0.924 1)" text-anchor="end">WHT</text>
<text transform="translate(363 672) scale(0.924 1)" text-anchor="end">LT</text>
<text transform="translate(363 681.4) scale(0.924 1)" text-anchor="end">BLU/</text>
<text transform="translate(363 690.2) scale(0.924 1)" text-anchor="end">WHT</text>
<rect x="262" y="711.3" width="70" height="27.90000000000009" fill="#dcdcff" stroke="none"/>
<path d="M262,711.3 H332 M262,739.2 H332" stroke="#3c3c3c" stroke-width="1.5" stroke-dasharray="8.3 3.6" fill="none"/>
<path d="M262,711.3 V739.2 M332,711.3 V739.2" stroke="#222" stroke-width="1.3" stroke-dasharray="8.3 3.6" fill="none"/>
<path d="M275.5,712 L275.5,738.6" stroke="#111" stroke-width="1.0" fill="none" stroke-linejoin="miter"/>
<path d="M272.8,715.4 L275.8,711.8 L278.8,715.4" stroke="#2a2a2a" stroke-width="1" fill="none"/>
<path d="M272.8,735.1999999999999 L275.8,738.8 L278.8,735.1999999999999" stroke="#2a2a2a" stroke-width="1" fill="none"/>
<circle cx="275.8" cy="725.5" r="1.6" fill="#000"/>
<path d="M275.8,725.5 L314.5,725.5 L314.5,712" stroke="#111" stroke-width="1.0" fill="none" stroke-linejoin="miter"/>
<path d="M311.5,715.4 L314.5,711.8 L317.5,715.4" stroke="#2a2a2a" stroke-width="1" fill="none"/>
<path d="M271.40000000000003,708.5 Q275.8,703.5 280.2,708.5" stroke="#111" stroke-width="0.95" fill="none"/>
<path d="M310.1,708.5 Q314.5,703.5 318.9,708.5" stroke="#111" stroke-width="0.95" fill="none"/>
<path d="M271.40000000000003,741.9 Q275.8,746.9 280.2,741.9" stroke="#111" stroke-width="0.95" fill="none"/>
<text transform="translate(272.40000000000003 704.8) scale(0.924 1)" text-anchor="end">C3</text>
<text transform="translate(280.0 704.0) scale(0.924 1)" text-anchor="start" text-decoration="underline">C1</text>
<text transform="translate(311.1 704.8) scale(0.924 1)" text-anchor="end">B2</text>
<text transform="translate(318.1 704.0) scale(0.924 1)" text-anchor="start" text-decoration="underline">C1</text>
<text transform="translate(272.40000000000003 753.0) scale(0.924 1)" text-anchor="end">C4</text>
<text transform="translate(280.0 752.2) scale(0.924 1)" text-anchor="start" text-decoration="underline">C1</text>
<text transform="translate(256.4 716.8) scale(0.924 1)" text-anchor="end">I/P FUSE</text>
<text transform="translate(258.4 726.8) scale(0.924 1)" text-anchor="end">BLOCK</text>
<text transform="translate(256.4 737) scale(0.924 1)" text-anchor="end">(BEHIND LOWER</text>
<text transform="translate(256.4 745.8) scale(0.924 1)" text-anchor="end">LEFT END</text>
<text transform="translate(258.4 755) scale(0.924 1)" text-anchor="end">OF DASH)</text>
<path d="M314.5,706.4 L314.5,655.2 L365.8,655.2 L365.8,706.4" stroke="#14f4ec" stroke-width="1.55" fill="none" stroke-linejoin="miter"/>
<path d="M275.8,744 L275.8,788.8" stroke="#14f4ec" stroke-width="1.3" fill="none" stroke-linejoin="miter"/>
<text transform="translate(273.8 765.8) scale(0.924 1)" text-anchor="end">LT</text>
<text transform="translate(273.8 775) scale(0.924 1)" text-anchor="end">BLU/</text>
<text transform="translate(273.8 784.4) scale(0.924 1)" text-anchor="end">WHT</text>
<path d="M167.5,789.2 Q168.0,792.6 171.0,792.6 H221.3 L224.5,795.8 L227.7,792.6 H279.5 Q282.5,792.6 283,789.2" stroke="#444" stroke-width="1" fill="none"/>
<path d="M224.5,800.4 L224.5,847" stroke="#14f4ec" stroke-width="1.3" fill="none" stroke-linejoin="miter"/>
<path d="M84.2,808 L314.45,808 L314.45,847" stroke="#d8e028" stroke-width="1.75" fill="none" stroke-linejoin="miter"/>
<text transform="translate(74.6 811.4) scale(0.924 1)" text-anchor="middle">2</text>
<text transform="translate(88.8 805.8) scale(0.924 1)" text-anchor="start">YEL/BLK</text>
<text transform="translate(312 848.6) scale(0.924 1)" text-anchor="end">YEL/</text>
<text transform="translate(528.4 840) scale(0.924 1)" text-anchor="end">YEL/</text>
<text transform="translate(528.4 849.2) scale(0.924 1)" text-anchor="end">BLK</text>
<rect x="347.8" y="711.3" width="168.49999999999994" height="53.10000000000002" fill="#dcdcff" stroke="none"/>
<path d="M347.8,711.3 H516.3 M347.8,764.4 H516.3" stroke="#3c3c3c" stroke-width="1.5" stroke-dasharray="8.3 3.6" fill="none"/>
<path d="M347.8,711.3 V764.4 M516.3,711.3 V764.4" stroke="#222" stroke-width="1.3" stroke-dasharray="8.3 3.6" fill="none"/>
<path d="M365.5,712 L365.5,764" stroke="#111" stroke-width="1.0" fill="none" stroke-linejoin="miter"/>
<path d="M362.5,715.4 L365.5,711.8 L368.5,715.4" stroke="#2a2a2a" stroke-width="1" fill="none"/>
<path d="M362.5,760.4 L365.5,764 L368.5,760.4" stroke="#2a2a2a" stroke-width="1" fill="none"/>
<path d="M361.40000000000003,708.5 Q365.8,703.5 370.2,708.5" stroke="#111" stroke-width="0.95" fill="none"/>
<path d="M399.0,708.5 Q403.4,703.5 407.79999999999995,708.5" stroke="#111" stroke-width="0.95" fill="none"/>
<path d="M489.40000000000003,708.5 Q493.8,703.5 498.2,708.5" stroke="#111" stroke-width="0.95" fill="none"/>
<path d="M361.40000000000003,767.3 Q365.8,772.3 370.2,767.3" stroke="#111" stroke-width="0.95" fill="none"/>
<path d="M399.20000000000005,767.3 Q403.6,772.3 408.0,767.3" stroke="#111" stroke-width="0.95" fill="none"/>
<path d="M450.6,767.3 Q455,772.3 459.4,767.3" stroke="#111" stroke-width="0.95" fill="none"/>
<text transform="translate(363.2 704.2) scale(0.924 1)" text-anchor="end">1</text>
<text transform="translate(369.40000000000003 703.4) scale(0.924 1)" text-anchor="start" text-decoration="underline">C2</text>
<text transform="translate(400.0 704.2) scale(0.924 1)" text-anchor="end">3</text>
<text transform="translate(407.59999999999997 703.4) scale(0.924 1)" text-anchor="start" text-decoration="underline">C7</text>
<text transform="translate(490.0 704.2) scale(0.924 1)" text-anchor="end">6</text>
<text transform="translate(497.6 703.4) scale(0.924 1)" text-anchor="start" text-decoration="underline">C7</text>
<text transform="translate(362.40000000000003 779.6) scale(0.924 1)" text-anchor="end">5</text>
<text transform="translate(369.40000000000003 778.8) scale(0.924 1)" text-anchor="start" text-decoration="underline">C3</text>
<text transform="translate(400.0 779.6) scale(0.924 1)" text-anchor="end">10</text>
<text transform="translate(407.6 778.8) scale(0.924 1)" text-anchor="start" text-decoration="underline">C3</text>
<text transform="translate(451.6 779.6) scale(0.924 1)" text-anchor="end">9</text>
<text transform="translate(458.8 778.8) scale(0.924 1)" text-anchor="start" text-decoration="underline">C2</text>
<text transform="translate(401.4 722.6) scale(0.924 1)" text-anchor="middle">SUPPLY</text>
<text transform="translate(401.4 732.6) scale(0.924 1)" text-anchor="middle">VOLT</text>
<text transform="translate(491.4 722.6) scale(0.924 1)" text-anchor="middle">LAMP</text>
<text transform="translate(491.4 732.6) scale(0.924 1)" text-anchor="middle">CTRL</text>
<text transform="translate(454.4 752.6) scale(0.924 1)" text-anchor="middle">LO SPD</text>
<text transform="translate(454.4 762.6) scale(0.924 1)" text-anchor="middle">GMLAN</text>
<text transform="translate(402.6 762.2) scale(0.924 1)" text-anchor="middle">GND</text>
<text transform="translate(513.4 775) scale(0.924 1)" text-anchor="end">DRIVER</text>
<text transform="translate(513.8 783.8) scale(0.924 1)" text-anchor="end">DOOR</text>
<text transform="translate(515.8 793.4) scale(0.924 1)" text-anchor="end">SWITCH</text>
<path d="M365.8,769.6 L365.8,847" stroke="#14f4ec" stroke-width="1.55" fill="none" stroke-linejoin="miter"/>
<path d="M403.6,769.6 L403.6,847" stroke="#6a6a6a" stroke-width="1.3" fill="none" stroke-linejoin="miter"/>
<path d="M455,769.6 L455,811.5" stroke="#189818" stroke-width="1.9" fill="none" stroke-linejoin="miter"/>
<path d="M455,818.8 L450.2,810.6 H459.8 Z" fill="#000"/>
<text transform="translate(363.8 794) scale(0.924 1)" text-anchor="end">LT</text>
<text transform="translate(363.8 803.2) scale(0.924 1)" text-anchor="end">BLU/</text>
<text transform="translate(363.8 812.4) scale(0.924 1)" text-anchor="end">WHT</text>
<text transform="translate(401.8 794) scale(0.924 1)" text-anchor="end">BLK/</text>
<text transform="translate(401.8 803.2) scale(0.924 1)" text-anchor="end">WHT</text>
<text transform="translate(452 794) scale(0.924 1)" text-anchor="end">DK</text>
<text transform="translate(452 803.2) scale(0.924 1)" text-anchor="end">GRN</text>
<text transform="translate(454.4 827.6) scale(0.924 1)" text-anchor="middle">COMPUTER</text>
<text transform="translate(454.4 836.8) scale(0.924 1)" text-anchor="middle">DATA LINES</text>
<text transform="translate(454.4 846.4) scale(0.924 1)" text-anchor="middle">SYSTEM</text>
<path d="M403.5,706.4 L403.5,603.5 L415.5,603.5" stroke="#ff8a10" stroke-width="1.25" fill="none" stroke-linejoin="miter"/>
<path d="M493.7,706.4 L493.7,603.5 L482.5,603.5" stroke="#ff8a10" stroke-width="1.25" fill="none" stroke-linejoin="miter"/>
<rect x="415.5" y="583" width="67.0" height="62.39999999999998" fill="#dcdcff" stroke="none"/>
<path d="M415.5,583 H482.5 M415.5,645.4 H482.5" stroke="#3c3c3c" stroke-width="1.5" stroke-dasharray="8.3 3.6" fill="none"/>
<path d="M415.5,583 V645.4 M482.5,583 V645.4" stroke="#222" stroke-width="1.3" stroke-dasharray="8.3 3.6" fill="none"/>
<path d="M415.5,603.5 L433.4,603.5" stroke="#333" stroke-width="1.0" fill="none" stroke-linejoin="miter"/>
<path d="M464.2,603.5 L482.5,603.5" stroke="#333" stroke-width="1.0" fill="none" stroke-linejoin="miter"/>
<circle cx="448.8" cy="603.5" r="11.4" fill="none" stroke="#2a2a2a" stroke-width="1"/>
<path d="M433.4,603.5 L436.6,600.6 L439.8,603.5 L436.6,606.4 Z M464.2,603.5 L461,600.6 L457.8,603.5 L461,606.4 Z" fill="none" stroke="#2a2a2a" stroke-width="0.9"/>
<path d="M443,600.4 L439.8,603.5 L443,606.6 M454.6,600.4 L457.8,603.5 L454.6,606.6" fill="none" stroke="#2a2a2a" stroke-width="0.9"/>
<path d="M442,603.4 C443.5,607.6 446,608.2 448,606 C450.6,603.4 450.2,599.6 448.7,599.6 C447.2,599.6 447,603.4 449.5,606 C451.5,608.2 454,607.6 455.6,603.4" fill="none" stroke="#111" stroke-width="1.05"/>
<text transform="translate(448.8 623.8) scale(0.924 1)" text-anchor="middle">EXTERIOR</text>
<text transform="translate(448.8 633) scale(0.924 1)" text-anchor="middle">ILLUMINATION</text>
<text transform="translate(448.8 641.8) scale(0.924 1)" text-anchor="middle">LAMP</text>
<text transform="translate(448.8 655.8) scale(0.924 1)" text-anchor="middle">DRIVER OUTSIDE</text>
<text transform="translate(448.8 665) scale(0.924 1)" text-anchor="middle">REARVIEW</text>
<text transform="translate(448.8 674.4) scale(0.924 1)" text-anchor="middle">MIRROR</text>
<text transform="translate(401.3 683.2) scale(0.924 1)" text-anchor="end">ORG/</text>
<text transform="translate(401.3 693) scale(0.924 1)" text-anchor="end">WHT</text>
<text transform="translate(490.8 683.2) scale(0.924 1)" text-anchor="end">ORG/</text>
<text transform="translate(490.8 693) scale(0.924 1)" text-anchor="end">WHT</text>
<text transform="translate(592.5 637) scale(0.924 1)" text-anchor="middle">W/O HEATED/</text>
<text transform="translate(592.5 646.4) scale(0.924 1)" text-anchor="middle">POWER</text>
<text transform="translate(592.5 655.6) scale(0.924 1)" text-anchor="middle">FOLDING</text>
<text transform="translate(592.5 664.6) scale(0.924 1)" text-anchor="middle">MIRROR</text>
<text transform="translate(682 637) scale(0.924 1)" text-anchor="middle">W/ HEATED/</text>
<text transform="translate(682 646.4) scale(0.924 1)" text-anchor="middle">POWER</text>
<text transform="translate(682 655.6) scale(0.924 1)" text-anchor="middle">FOLDING</text>
<text transform="translate(682 664.6) scale(0.924 1)" text-anchor="middle">MIRROR</text>
<text transform="translate(643.8 644.6) scale(0.924 1)" text-anchor="end">DK</text>
<text transform="translate(643.8 653.8) scale(0.924 1)" text-anchor="end">BLU/</text>
<text transform="translate(643.8 662.6) scale(0.924 1)" text-anchor="end">WHT</text>
<path d="M576.8,674.6 L579.8,670.8 H643.8 L646.8,667.4 L649.8,670.8 H688.8 L691.8,674.6" stroke="#444" stroke-width="1" fill="none"/>
<path d="M582.5,678.8 L582.5,812.6" stroke="#2640a0" stroke-width="1.15" fill="none" stroke-linejoin="miter"/>
<path d="M685,677.4 L685,724" stroke="#2640a0" stroke-width="1.15" fill="none" stroke-linejoin="miter"/>
<path d="M685,723.6 L672.5,705.6 L633.8,705.6 L633.8,812.6" stroke="#2640a0" stroke-width="1.15" fill="none" stroke-linejoin="miter"/>
<text transform="translate(682.6 683.4) scale(0.924 1)" text-anchor="end">DK</text>
<text transform="translate(682.6 693) scale(0.924 1)" text-anchor="end">BLU/</text>
<text transform="translate(682.6 702.6) scale(0.924 1)" text-anchor="end">WHT</text>
<text transform="translate(580.4 727.8) scale(0.924 1)" text-anchor="end">DK</text>
<text transform="translate(580.4 736.8) scale(0.924 1)" text-anchor="end">BLU/</text>
<text transform="translate(580.4 745.8) scale(0.924 1)" text-anchor="end">WHT</text>
<text transform="translate(631.6 778.8) scale(0.924 1)" text-anchor="end">DK</text>
<text transform="translate(631.6 788) scale(0.924 1)" text-anchor="end">BLU/</text>
<text transform="translate(631.6 797.4) scale(0.924 1)" text-anchor="end">WHT</text>
<rect x="670.8" y="723.8" width="31.700000000000045" height="28.200000000000045" fill="#dcdcff" stroke="none"/>
<path d="M670.8,723.8 H702.5 M670.8,752 H702.5" stroke="#3c3c3c" stroke-width="1.5" stroke-dasharray="8.3 3.6" fill="none"/>
<path d="M670.8,723.8 V752 M702.5,723.8 V752" stroke="#222" stroke-width="1.3" stroke-dasharray="8.3 3.6" fill="none"/>
<path d="M685.4,724 L685.4,751.4" stroke="#111" stroke-width="1.0" fill="none" stroke-linejoin="miter"/>
<path d="M682.0,748.0 L685,751.6 L688.0,748.0" stroke="#2a2a2a" stroke-width="1" fill="none"/>
<path d="M680.6,754.9 Q685,759.9 689.4,754.9" stroke="#111" stroke-width="0.95" fill="none"/>
<text transform="translate(677.6 721.8) scale(0.924 1)" text-anchor="end">3A4</text>
<text transform="translate(681.8 764.6) scale(0.924 1)" text-anchor="end">A4</text>
<text transform="translate(688.8 763.8) scale(0.924 1)" text-anchor="start" text-decoration="underline">C3</text>
<text transform="translate(705.8 730) scale(0.924 1)" text-anchor="start">RIGHT</text>
<text transform="translate(705.8 738.8) scale(0.924 1)" text-anchor="start">I/P</text>
<text transform="translate(705.8 748.4) scale(0.924 1)" text-anchor="start">JUNCTION</text>
<text transform="translate(705.8 757.6) scale(0.924 1)" text-anchor="start">BLOCK</text>
<text transform="translate(705.8 766.4) scale(0.924 1)" text-anchor="start">(BELOW RIGHT</text>
<text transform="translate(705.8 775) scale(0.924 1)" text-anchor="start">END OF DASH)</text>
<path d="M685,757.2 L685,847" stroke="#2640a0" stroke-width="1.15" fill="none" stroke-linejoin="miter"/>
<text transform="translate(682.6 793.4) scale(0.924 1)" text-anchor="end">DK</text>
<text transform="translate(682.6 802.6) scale(0.924 1)" text-anchor="end">BLU/</text>
<text transform="translate(682.6 811.8) scale(0.924 1)" text-anchor="end">WHT</text>
<path d="M576.8,814.2 Q577.3,817.6 580.3,817.6 H605.0999999999999 L608.3,821 L611.5,817.6 H637.3 Q640.3,817.6 640.8,814.2" stroke="#444" stroke-width="1" fill="none"/>
<path d="M608.3,826.2 L608.3,847" stroke="#2640a0" stroke-width="1.15" fill="none" stroke-linejoin="miter"/>
<text transform="translate(605.8 837) scale(0.924 1)" text-anchor="end">DK</text>
<text transform="translate(605.8 846.4) scale(0.924 1)" text-anchor="end">BLU/</text>
</svg>
<div class="clip"></div>
</body>
</html>
